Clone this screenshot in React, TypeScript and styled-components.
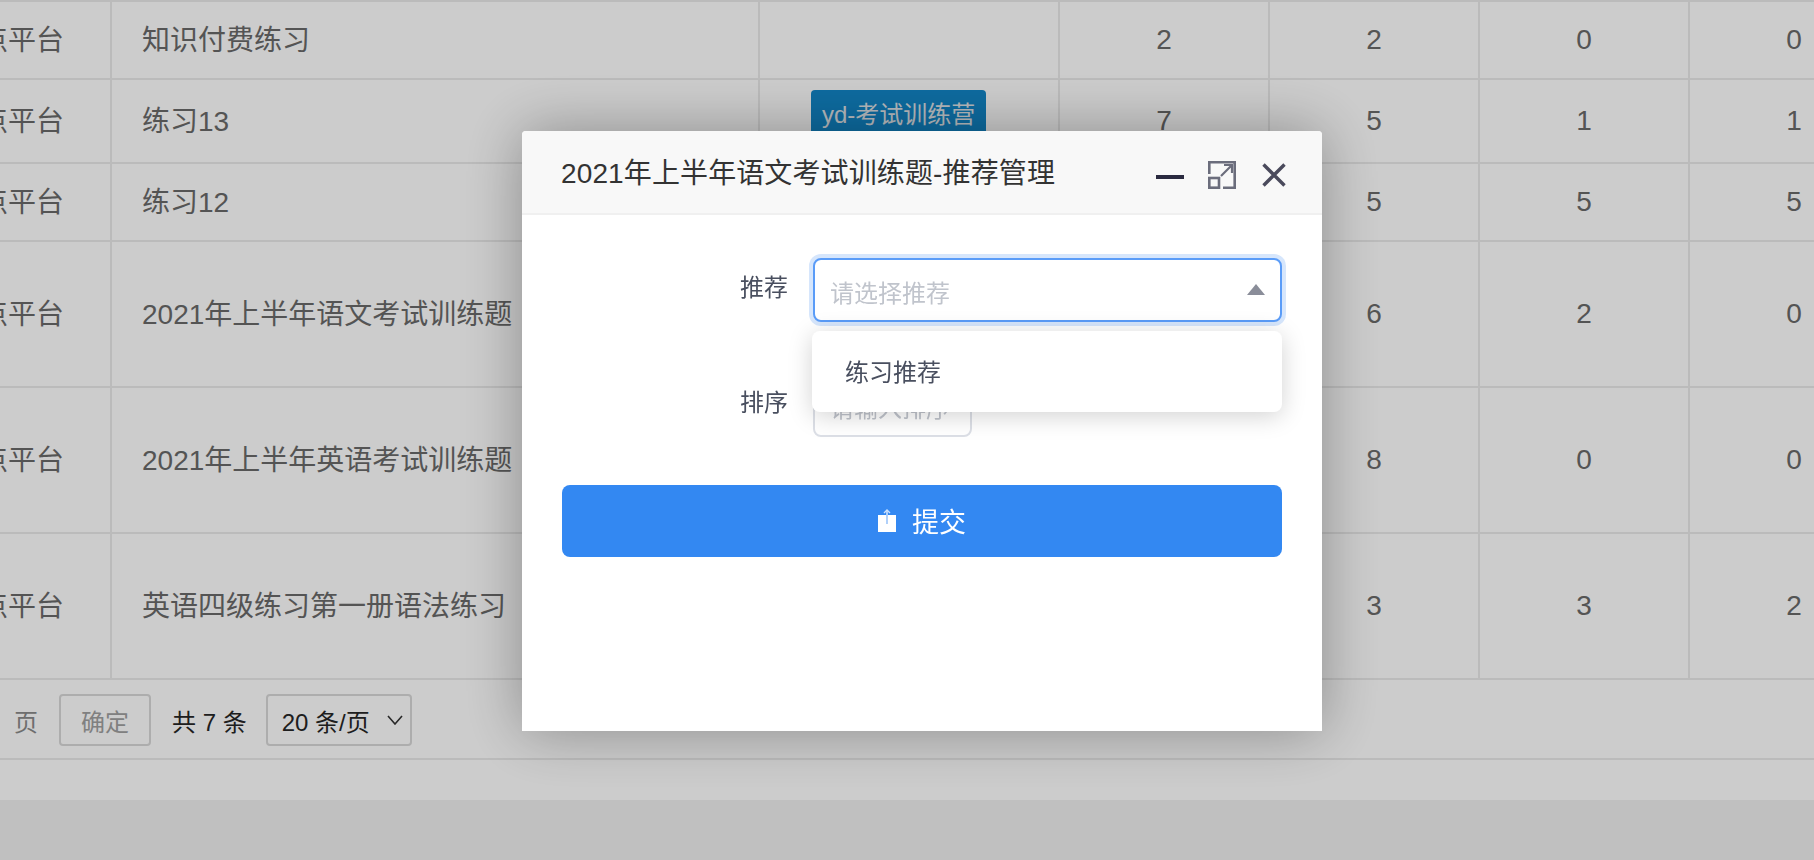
import React from 'react'
import styled, { createGlobalStyle } from 'styled-components'

const GlobalStyle = createGlobalStyle`
  html, body {
    margin: 0;
    height: 100%;
    overflow: hidden;
    background: #fff;
    font-family: "Liberation Sans", "Noto Sans CJK SC", sans-serif;
  }
`

const Page = styled.div`
  width: 1814px;
  height: 860px;
  overflow: hidden;
  background: #f0f0f0;
`

const Card = styled.div`
  width: 1899px;
  height: 800px;
  background: #fff;
`

const Table = styled.div`
  display: grid;
  grid-template-columns: 112px 648px 300px repeat(4, 210px);
  grid-template-rows: 78px 84px 78px 146px 146px 146px;
  border-top: 2px solid #eaeaea;
`

const Cell = styled.div<{ $align?: 'left' | 'center' | 'right' }>`
  display: flex;
  align-items: center;
  justify-content: ${(p) =>
    p.$align === 'center' ? 'center' : p.$align === 'right' ? 'flex-end' : 'flex-start'};
  box-sizing: border-box;
  border-right: 2px solid #eaeaea;
  border-bottom: 2px solid #eaeaea;
  padding: ${(p) =>
    p.$align === 'left' ? '0 30px 4px' : p.$align === 'right' ? '0 46px 4px 0' : '0'};
  font-size: 28px;
  color: #6a6a6a;
  white-space: nowrap;
  overflow: hidden;
`

const Tag = styled.span`
  background: #1186c8;
  color: #e4e8ec;
  border-radius: 4px;
  font-size: 24px;
  padding: 5px 11px;
  align-self: flex-start;
  margin: 10px 0 0 51px;
`

const Pager = styled.div`
  display: flex;
  align-items: center;
  height: 80px;
  box-sizing: border-box;
  border-bottom: 2px solid #eaeaea;
  padding: 2px 0 0 14px;
  font-size: 24px;
  color: #262626;
`

const PagerUnit = styled.span`
  color: #8a8a8a;
  margin-right: 21px;
`

const PagerButton = styled.div`
  width: 92px;
  height: 52px;
  box-sizing: border-box;
  border: 2px solid #d9d9d9;
  border-radius: 4px;
  display: flex;
  align-items: center;
  justify-content: center;
  color: #a0a0a0;
  margin-right: 21px;
`

const PagerSelect = styled.div`
  width: 146px;
  height: 52px;
  box-sizing: border-box;
  border: 2px solid #d9d9d9;
  border-radius: 4px;
  display: flex;
  align-items: center;
  justify-content: space-between;
  padding: 0 7px 0 14px;
  margin-left: 19px;
`

const Overlay = styled.div`
  position: fixed;
  inset: 0;
  background: rgba(0, 0, 0, 0.2);
`

const Modal = styled.div`
  position: fixed;
  left: 522px;
  top: 131px;
  width: 800px;
  height: 600px;
  background: #fff;
  border-radius: 4px 4px 0 0;
  box-shadow: 0 0 60px rgba(0, 0, 0, 0.32);
  display: flex;
  flex-direction: column;
`

const ModalHeader = styled.div`
  height: 84px;
  box-sizing: border-box;
  background: #f8f8f8;
  border-bottom: 2px solid #f0f0f0;
  border-radius: 4px 4px 0 0;
  display: flex;
  align-items: center;
  padding: 0 36px 0 39px;
`

const ModalTitle = styled.div`
  flex: 1;
  font-size: 28px;
  letter-spacing: 0.12px;
  color: #333;
  margin-top: -2px;
`

const HeaderIcons = styled.div`
  display: flex;
  align-items: center;
  gap: 24px;
  margin-top: 6px;
`

const ModalBody = styled.div`
  padding: 43px 40px 0;
  display: flex;
  flex-direction: column;
`

const FormRow = styled.div<{ $gap: number }>`
  display: flex;
  margin-bottom: ${(p) => p.$gap}px;
`

const Label = styled.div`
  width: 251px;
  box-sizing: border-box;
  padding: 13px 25px 0 0;
  text-align: right;
  font-size: 24px;
  line-height: 34px;
  color: #494f5f;
`

const FieldBox = styled.div<{ $focused?: boolean; $width: number }>`
  width: ${(p) => p.$width}px;
  height: 64px;
  box-sizing: border-box;
  background: #fff;
  border: 2px solid ${(p) => (p.$focused ? '#5a9cf8' : '#dcdfe6')};
  border-radius: 8px;
  ${(p) => (p.$focused ? 'box-shadow: 0 0 0 4px #d6e6fc;' : '')}
  display: flex;
  align-items: center;
  justify-content: space-between;
  padding: 2px 15px 0 15px;
  font-size: 24px;
  color: #c0c4cc;
  white-space: nowrap;
  overflow: hidden;
`

const Caret = styled.span`
  width: 0;
  height: 0;
  border-left: 9px solid transparent;
  border-right: 9px solid transparent;
  border-bottom: 11px solid #8a8d99;
  margin-top: -4px;
`

const Dropdown = styled.div`
  position: fixed;
  left: 812px;
  top: 331px;
  width: 470px;
  height: 81px;
  background: #fff;
  border-radius: 8px;
  box-shadow: 0 4px 24px rgba(0, 0, 0, 0.18);
  display: flex;
  align-items: center;
  padding: 0 0 2px 33px;
  box-sizing: border-box;
  font-size: 24px;
  color: #494f5f;
`

const SubmitButton = styled.button`
  height: 72px;
  width: 720px;
  border: 0;
  border-radius: 8px;
  background: #3388f2;
  color: #fff;
  font: inherit;
  font-size: 27px;
  display: flex;
  align-items: center;
  justify-content: center;
  gap: 16px;
  padding: 0 0 2px;
`

type Row = { source: string; name: string; tag?: string; values: string[] }

const rows: Row[] = [
  { source: '点平台', name: '知识付费练习', values: ['2', '2', '0', '0'] },
  { source: '点平台', name: '练习13', tag: 'yd-考试训练营', values: ['7', '5', '1', '1'] },
  { source: '点平台', name: '练习12', values: ['', '5', '5', '5'] },
  { source: '点平台', name: '2021年上半年语文考试训练题', values: ['', '6', '2', '0'] },
  { source: '点平台', name: '2021年上半年英语考试训练题', values: ['', '8', '0', '0'] },
  { source: '点平台', name: '英语四级练习第一册语法练习', values: ['', '3', '3', '2'] },
]

function MaximizeIcon() {
  return (
    <svg width="28" height="28" viewBox="0 0 28 28" fill="none" stroke="#6b6d7c" strokeWidth="2.6">
      <path d="M1.3 13V1.3H26.7V26.7H15" />
      <rect x="1.3" y="17" width="9.7" height="9.7" />
      <path d="M13 15L24 4M16 4H24V12" strokeWidth="2.2" />
    </svg>
  )
}

function CloseIcon() {
  return (
    <svg width="26" height="24" viewBox="0 0 26 24" fill="none" stroke="#4a4a5c" strokeWidth="3.4">
      <path d="M3.5 1.5L24.5 22.5M24.5 1.5L3.5 22.5" />
    </svg>
  )
}

function MinimizeIcon() {
  return (
    <svg width="28" height="28" viewBox="0 0 28 28" fill="#2a2a40">
      <rect x="0" y="14" width="28" height="4" />
    </svg>
  )
}

function UploadIcon() {
  return (
    <svg width="18" height="23" viewBox="0 0 18 23" fill="none">
      <rect x="0" y="6" width="18" height="17" fill="#fff" />
      <path d="M9 1V6" stroke="#cfe2fc" strokeWidth="1.6" />
      <path d="M6 4L9 1L12 4" stroke="#cfe2fc" strokeWidth="1.4" />
      <path d="M9 6V15" stroke="#9cc5f9" strokeWidth="1.6" />
    </svg>
  )
}

function ChevronIcon() {
  return (
    <svg width="16" height="10" viewBox="0 0 16 10" fill="none" stroke="#333" strokeWidth="1.6">
      <path d="M1 1L8 9L15 1" />
    </svg>
  )
}

export default function App() {
  return (
    <Page>
      <GlobalStyle />
      <Card>
        <Table>
          {rows.map((row) => (
            <React.Fragment key={row.name}>
              <Cell $align="right">{row.source}</Cell>
              <Cell $align="left">{row.name}</Cell>
              <Cell>{row.tag && <Tag>{row.tag}</Tag>}</Cell>
              {row.values.map((value, i) => (
                <Cell $align="center" key={i}>
                  {value}
                </Cell>
              ))}
            </React.Fragment>
          ))}
        </Table>
        <Pager>
          <PagerUnit>页</PagerUnit>
          <PagerButton>确定</PagerButton>
          <span>共 7 条</span>
          <PagerSelect>
            20 条/页
            <ChevronIcon />
          </PagerSelect>
        </Pager>
      </Card>
      <Overlay />
      <Modal>
        <ModalHeader>
          <ModalTitle>2021年上半年语文考试训练题-推荐管理</ModalTitle>
          <HeaderIcons>
            <MinimizeIcon />
            <MaximizeIcon />
            <CloseIcon />
          </HeaderIcons>
        </ModalHeader>
        <ModalBody>
          <FormRow $gap={51}>
            <Label>推荐</Label>
            <FieldBox $focused $width={469}>
              请选择推荐
              <Caret />
            </FieldBox>
          </FormRow>
          <FormRow $gap={48}>
            <Label>排序</Label>
            <FieldBox $width={159}>请输入排序</FieldBox>
          </FormRow>
          <SubmitButton>
            <UploadIcon />
            提交
          </SubmitButton>
        </ModalBody>
      </Modal>
      <Dropdown>练习推荐</Dropdown>
    </Page>
  )
}
